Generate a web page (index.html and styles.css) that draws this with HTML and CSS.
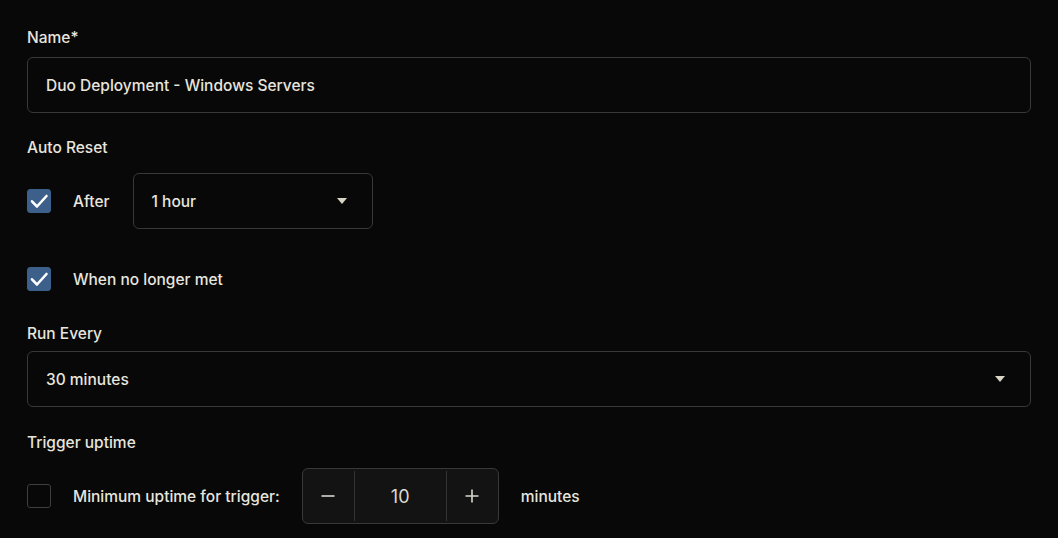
FILE: index.html
```html
<!DOCTYPE html>
<html>
<head>
<meta charset="utf-8">
<link rel="stylesheet" href="styles.css">
</head>
<body>
<div class="form">
  <div class="label">Name*</div>
  <div class="field field-full">Duo Deployment - Windows Servers</div>

  <div class="label label-section">Auto Reset</div>
  <div class="row row-after">
    <span class="check checked"><svg viewBox="0 0 24 24" width="24" height="24"><path d="M5 12.3l5 5.2 9.5-10.5" fill="none" stroke="#fff" stroke-width="2.6" stroke-linecap="round" stroke-linejoin="round"/></svg></span>
    <span class="check-label">After</span>
    <div class="field select select-small"><span>1 hour</span><span class="caret"></span></div>
  </div>
  <div class="row row-met">
    <span class="check checked"><svg viewBox="0 0 24 24" width="24" height="24"><path d="M5 12.3l5 5.2 9.5-10.5" fill="none" stroke="#fff" stroke-width="2.6" stroke-linecap="round" stroke-linejoin="round"/></svg></span>
    <span class="check-label">When no longer met</span>
  </div>

  <div class="label label-run">Run Every</div>
  <div class="field select field-full"><span>30 minutes</span><span class="caret"></span></div>

  <div class="label label-trigger">Trigger uptime</div>
  <div class="row row-trigger">
    <span class="check"></span>
    <span class="check-label">Minimum uptime for trigger:</span>
    <div class="stepper">
      <span class="step step-minus"><svg viewBox="0 0 16 16" width="16" height="16"><path d="M1.5 8h13" stroke="#d8d6cf" stroke-width="1.6"/></svg></span>
      <span class="step-value">10</span>
      <span class="step step-plus"><svg viewBox="0 0 16 16" width="16" height="16"><path d="M1.5 8h13M8 1.5v13" stroke="#d8d6cf" stroke-width="1.6"/></svg></span>
    </div>
    <span class="unit">minutes</span>
  </div>
</div>
</body>
</html>
```
FILE: styles.css
```css
html, body {
  margin: 0;
  padding: 0;
  background: #080808;
}
body {
  font-family: Inter, "Noto Sans", sans-serif;
  color: #e7e5de;
  font-size: 15.5px;
  font-weight: 500;
}
.form {
  padding: 28px 27px 0 27px;
  display: flex;
  flex-direction: column;
}
.label {
  line-height: 20px;
}
.field {
  box-sizing: border-box;
  height: 56px;
  border: 1px solid #383838;
  border-radius: 6px;
  display: flex;
  align-items: center;
  padding: 0 18px;
}
.field-full {
  margin-top: 9px;
}
.label-section {
  margin-top: 25px;
}
.row {
  display: flex;
  align-items: center;
}
.row-after {
  margin-top: 15px;
}
.row-met {
  margin-top: 38px;
}
.check {
  box-sizing: border-box;
  width: 24px;
  height: 24px;
  border-radius: 3px;
  border: 1px solid #3e3e3e;
  flex: none;
  display: flex;
}
.check.checked {
  background: #3c6089;
  border-color: #3c6089;
}
.check.checked svg {
  margin: -1px;
}
.check-label {
  margin-left: 22px;
}
.select {
  justify-content: space-between;
}
.select-small {
  width: 240px;
  margin-left: 23px;
}
.caret {
  width: 0;
  height: 0;
  border-left: 5.5px solid transparent;
  border-right: 5.5px solid transparent;
  border-top: 6px solid #d9d5c4;
  margin-right: 7px;
}
.label-run {
  margin-top: 33px;
}
.label-run + .field-full {
  margin-top: 7px;
}
.label-trigger {
  margin-top: 26px;
}
.row-trigger {
  margin-top: 15px;
}
.stepper {
  box-sizing: border-box;
  margin-left: 22px;
  width: 197px;
  height: 56px;
  border: 1px solid #383838;
  border-radius: 6px;
  background: #131313;
  display: flex;
  align-items: stretch;
}
.step {
  width: 51px;
  display: flex;
  align-items: center;
  justify-content: center;
}
.step-minus {
  border-right: 1px solid #333;
  margin: 2px 0;
}
.step-plus {
  border-left: 1px solid #333;
  margin: 2px 0;
}
.step-value {
  flex: 1;
  display: flex;
  align-items: center;
  justify-content: center;
  font-size: 18px;
  font-weight: 400;
  color: #dcdad2;
}
.unit {
  margin-left: 22px;
}
```
